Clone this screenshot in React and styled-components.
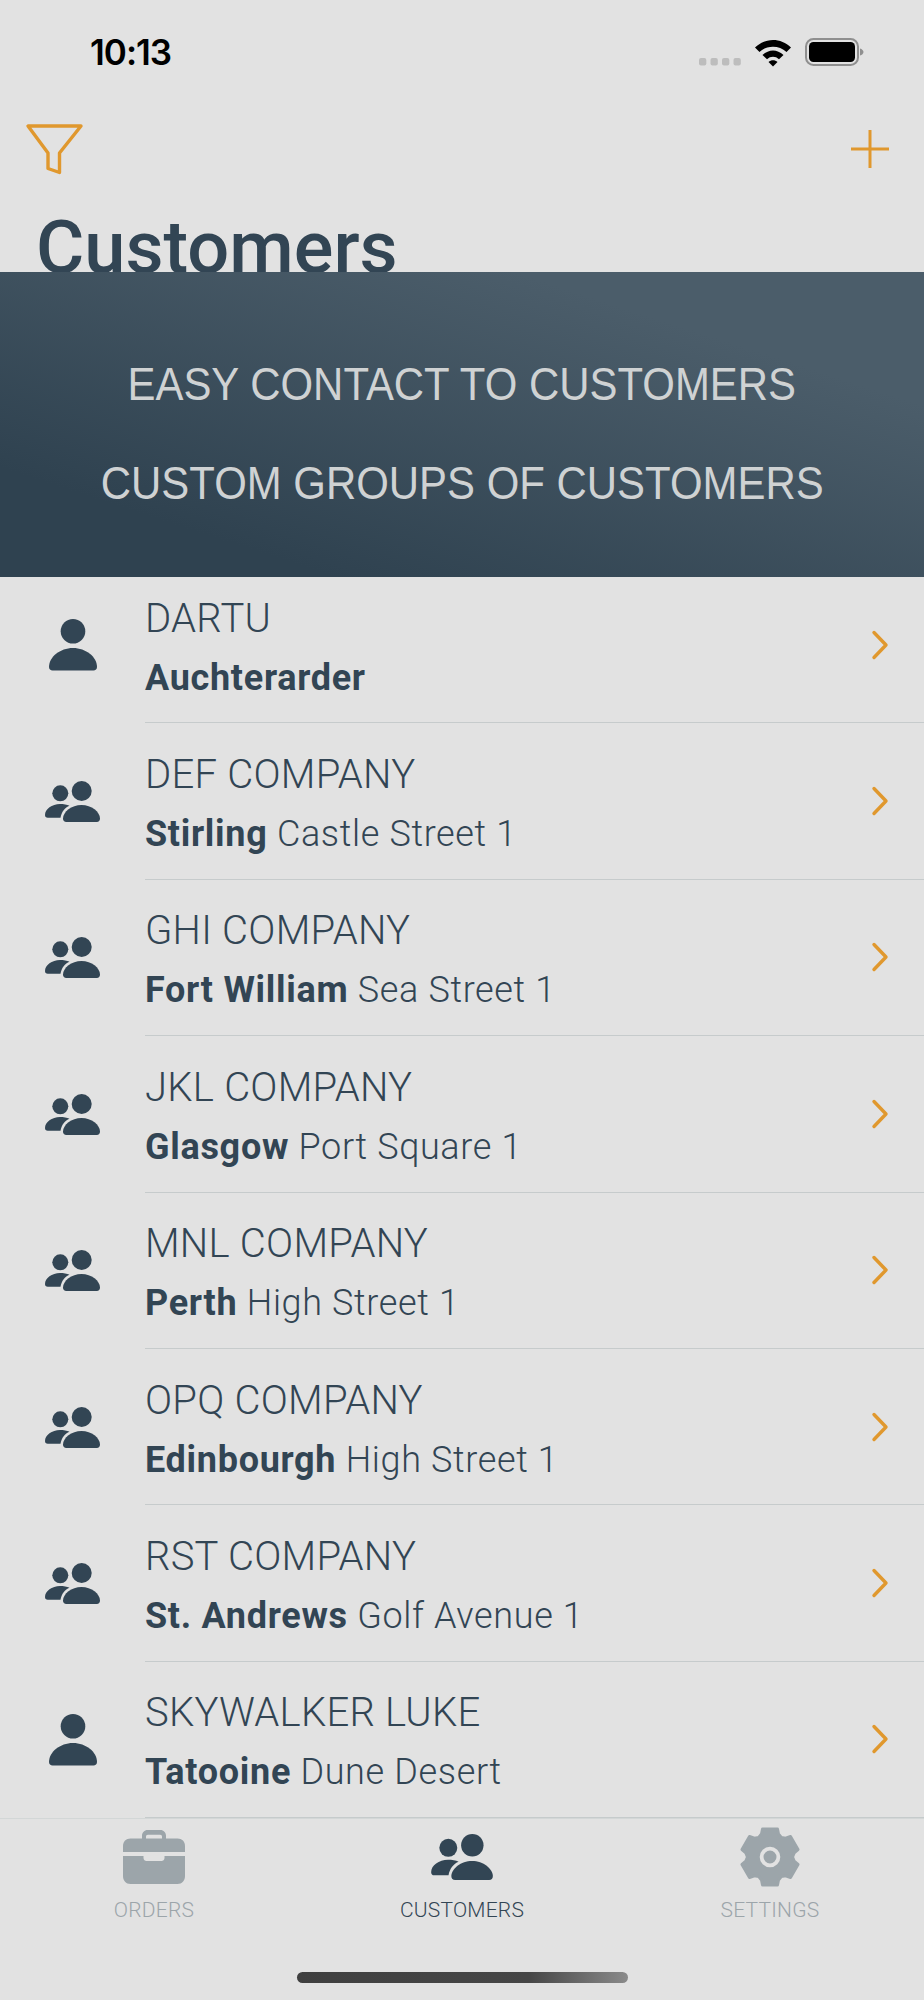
import React from "react";
import styled, { createGlobalStyle } from "styled-components";

const ink = "#324554";
const amber = "#e0982e";
const mute = "#9ca5aa";

const Global = createGlobalStyle`
  html, body { margin: 0; padding: 0; background: #e2e2e2; }
`;

const Phone = styled.div`
  width: 924px;
  height: 2000px;
  display: flex;
  flex-direction: column;
  overflow: hidden;
  background: #e2e2e2;
  font-family: "Roboto", "Liberation Sans", sans-serif;
  color: ${ink};
`;

const StatusBar = styled.div`
  height: 110px;
  flex: none;
  box-sizing: border-box;
  padding: 32px 59px 0 90px;
  display: flex;
  justify-content: space-between;
  align-items: flex-start;
`;

const Clock = styled.div`
  font-family: "Inter", "Liberation Sans", sans-serif;
  font-weight: 600;
  font-size: 35px;
  line-height: 40px;
  color: #000;
  letter-spacing: -1px;
`;

const StatusIcons = styled.svg`
  display: block;
  margin-top: 6px;
`;

const NavBar = styled.div`
  height: 70px;
  flex: none;
  box-sizing: border-box;
  padding: 13px 35px 0 25px;
  display: flex;
  justify-content: space-between;
  align-items: flex-start;
`;

const PlusIcon = styled.svg`
  display: block;
  margin-top: 7px;
`;

const TitleClip = styled.div`
  height: 92px;
  flex: none;
  overflow: hidden;
  padding-left: 36px;
`;

const Title = styled.h1`
  margin: 0;
  font-size: 74px;
  line-height: 136px;
  font-weight: 500;
  color: ${ink};
`;

const Banner = styled.div`
  height: 305px;
  flex: none;
  box-sizing: border-box;
  padding-top: 18px;
  display: flex;
  flex-direction: column;
  align-items: center;
  justify-content: center;
  gap: 43px;
  background: linear-gradient(18deg, #2f4250 18%, #4b5d6a 78%);
`;

const BannerLine = styled.div`
  font-family: "Liberation Sans", sans-serif;
  font-size: 47px;
  line-height: 56px;
  color: #cfd2d3;
  white-space: nowrap;
  transform: scaleX(0.892);
`;

const List = styled.div`
  flex: 1;
  min-height: 0;
  overflow: hidden;
  display: flex;
  flex-direction: column;
`;

const Row = styled.div`
  flex: none;
  height: 156.4px;
  display: flex;
  justify-content: flex-start;

  &:first-child {
    margin-top: -10px;
  }
`;

const RowIcon = styled.div`
  width: 145px;
  flex: none;
  display: flex;
  align-items: center;
  justify-content: center;
`;

const RowMain = styled.div`
  flex: 1;
  display: flex;
  align-items: center;
  justify-content: space-between;
  border-bottom: 1.5px solid #c6cbcc;
  padding-right: 35px;
  box-sizing: border-box;
`;

const RowText = styled.div`
  display: flex;
  flex-direction: column;
  gap: 13px;
  padding-top: 7px;
`;

const RowName = styled.div`
  font-size: 40px;
  line-height: 46px;
  font-weight: 300;
  letter-spacing: 0.25px;
`;

const RowAddress = styled.div`
  font-size: 36px;
  line-height: 46px;
  font-weight: 300;
  letter-spacing: 0.65px;

  b {
    font-weight: 700;
    letter-spacing: 0.7px;
  }
`;

const TabBar = styled.div`
  flex: none;
  height: 182px;
  box-sizing: border-box;
  border-top: 1.5px solid #d3d7d7;
  display: grid;
  grid-template-columns: repeat(3, 1fr);
  position: relative;
`;

const Tab = styled.div`
  display: flex;
  flex-direction: column;
  align-items: center;
  padding-top: 8px;
  color: ${(p) => (p.$active ? ink : mute)};
`;

const TabIconBox = styled.div`
  height: 60px;
  display: flex;
  align-items: center;
  justify-content: center;
`;

const TabLabel = styled.div`
  margin-top: 9px;
  font-size: 21px;
  line-height: 28px;
  font-weight: 300;
  letter-spacing: 0.2px;
`;

const HomeIndicator = styled.div`
  position: absolute;
  left: 297px;
  bottom: 17px;
  width: 331px;
  height: 11px;
  border-radius: 6px;
  background: linear-gradient(90deg, #3f3f3f 0%, #464646 70%, #8a8a8a 100%);
`;

const PersonIcon = () => (
  <svg width="48" height="52" viewBox="0 0 48 52">
    <circle cx="24" cy="12.3" r="12.3" fill={ink} />
    <path d="M24 29C11 29 0 38 0 48c0 2.200 1.500 3.600 3.500 3.600h41c2 0 3.500-1.400 3.500-3.600C48 38 37 29 24 29Z" fill={ink} />
  </svg>
);

const GroupIcon = ({ width = 55, height = 41, color = ink }) => (
  <svg width={width} height={height} viewBox="0 0 55 41">
    <circle cx="15.300" cy="12.300" r="8" fill={color} />
    <circle cx="36.700" cy="10" r="10" fill={color} />
    <path d="M15 23C7 23 0 28 0 34c0 1.800 1 2.800 2.800 2.800H15.500C16.500 31 20 26.500 24.500 24.800 22 23.500 18.500 23 15 23Z" fill={color} />
    <path d="M36.500 24C26.500 24 18 31 18 37.500c0 2.200 1.300 3.500 3.300 3.500h30.500c2 0 3.200-1.300 3.200-3.500C55 31 46.500 24 36.500 24Z" fill={color} />
  </svg>
);

const Chevron = () => (
  <svg width="18" height="30" viewBox="0 0 18 30">
    <path d="M3 2.500 15 15 3 27.500" fill="none" stroke={amber} strokeWidth="3.400" strokeLinecap="round" strokeLinejoin="round" />
  </svg>
);

const Funnel = () => (
  <svg width="60" height="52" viewBox="0 0 60 52">
    <path d="M3 3H56L34.500 30V49.500L23 45.500V30Z" fill="none" stroke={amber} strokeWidth="3.400" strokeLinejoin="round" />
  </svg>
);

const Plus = () => (
  <PlusIcon width="38" height="38" viewBox="0 0 38 38">
    <path d="M19 .500V37.500M.500 19H37.500" stroke={amber} strokeWidth="3" strokeLinecap="round" />
  </PlusIcon>
);

const Status = () => (
  <StatusIcons width="166" height="30" viewBox="0 0 166 30">
    {[0, 11.500, 23, 34.500].map((x) => (
      <rect key={x} x={x} y="20" width="7.300" height="7.500" rx="2" fill="#bdbdbd" />
    ))}
    <path d="M56 9.500C66 -.500 82 -.500 92 9.500L87.500 14C80 7 68 7 60.500 14Z" fill="#000" />
    <path d="M63.500 17C70 11 78 11 84.500 17L80 21.300C76.500 18 71.500 18 68 21.300Z" fill="#000" />
    <path d="M69.500 24C72 21.500 76 21.500 78.500 24L74 28.500Z" fill="#000" />
    <rect x="107" y="1" width="52" height="26" rx="7.500" fill="none" stroke="#8f8f8f" strokeWidth="2" />
    <rect x="110" y="4" width="46" height="20" rx="4.500" fill="#000" />
    <path d="M161 10.500c2 .500 3.500 2 3.500 3.500s-1.500 3-3.500 3.500Z" fill="#8f8f8f" />
  </StatusIcons>
);

const Briefcase = () => (
  <svg width="62" height="54" viewBox="0 0 62 54">
    <path d="M19 9V5.500C19 2.500 21.500 0 24.500 0h13C40.500 0 43 2.500 43 5.500V9h-4V6.500c0-1-.800-1.800-1.800-1.800H24.800c-1 0-1.800.800-1.800 1.800V9Z" fill={mute} />
    <path d="M0 16C0 11.500 3 8.500 7.500 8.500h47C59 8.500 62 11.500 62 16V22H0Z" fill={mute} />
    <path d="M0 26H20.500V28C20.500 30 22 31 23.500 31H38.500C40 31 41.500 30 41.500 28V26H62V46C62 50.500 59 54 54.500 54H7.500C3 54 0 50.500 0 46Z" fill={mute} />
  </svg>
);

const gearPoints = () => {
  const pts = [];
  for (let k = 0; k < 6; k++) {
    const a = ((k * 60 - 90) * Math.PI) / 180;
    const c = Math.cos(a);
    const s = Math.sin(a);
    const add = (r, t) => pts.push(`${(30 + r * c - t * s).toFixed(2)},${(30 + r * s + t * c).toFixed(2)}`);
    add(19.5, -11.3);
    add(23, -8.5);
    add(28, -7.5);
    add(28, 7.5);
    add(23, 8.5);
    add(19.5, 11.3);
  }
  return pts.join(" ");
};

const Gear = () => (
  <svg width="60" height="60" viewBox="0 0 60 60">
    <polygon points={gearPoints()} fill={mute} stroke={mute} strokeWidth="3" strokeLinejoin="round" />
    <circle cx="30" cy="30" r="8.400" fill="none" stroke="#e2e2e2" strokeWidth="3.800" />
  </svg>
);

const customers = [
  { name: "DARTU", city: "Auchterarder", street: "", single: true },
  { name: "DEF COMPANY", city: "Stirling", street: "Castle Street 1" },
  { name: "GHI COMPANY", city: "Fort William", street: "Sea Street 1" },
  { name: "JKL COMPANY", city: "Glasgow", street: "Port Square 1" },
  { name: "MNL COMPANY", city: "Perth", street: "High Street 1" },
  { name: "OPQ COMPANY", city: "Edinbourgh", street: "High Street 1" },
  { name: "RST COMPANY", city: "St. Andrews", street: "Golf Avenue 1" },
  { name: "SKYWALKER LUKE", city: "Tatooine", street: "Dune Desert", single: true },
];

export default function App() {
  return (
    <Phone>
      <Global />
      <StatusBar>
        <Clock>10:13</Clock>
        <Status />
      </StatusBar>
      <NavBar>
        <Funnel />
        <Plus />
      </NavBar>
      <TitleClip>
        <Title>Customers</Title>
      </TitleClip>
      <Banner>
        <BannerLine>EASY CONTACT TO CUSTOMERS</BannerLine>
        <BannerLine>CUSTOM GROUPS OF CUSTOMERS</BannerLine>
      </Banner>
      <List>
        {customers.map((c) => (
          <Row key={c.name}>
            <RowIcon>{c.single ? <PersonIcon /> : <GroupIcon />}</RowIcon>
            <RowMain>
              <RowText>
                <RowName>{c.name}</RowName>
                <RowAddress>
                  <b>{c.city}</b> {c.street}
                </RowAddress>
              </RowText>
              <Chevron />
            </RowMain>
          </Row>
        ))}
      </List>
      <TabBar>
        <Tab>
          <TabIconBox><Briefcase /></TabIconBox>
          <TabLabel>ORDERS</TabLabel>
        </Tab>
        <Tab $active>
          <TabIconBox><GroupIcon width={62} height={46} /></TabIconBox>
          <TabLabel>CUSTOMERS</TabLabel>
        </Tab>
        <Tab>
          <TabIconBox><Gear /></TabIconBox>
          <TabLabel>SETTINGS</TabLabel>
        </Tab>
        <HomeIndicator />
      </TabBar>
    </Phone>
  );
}
